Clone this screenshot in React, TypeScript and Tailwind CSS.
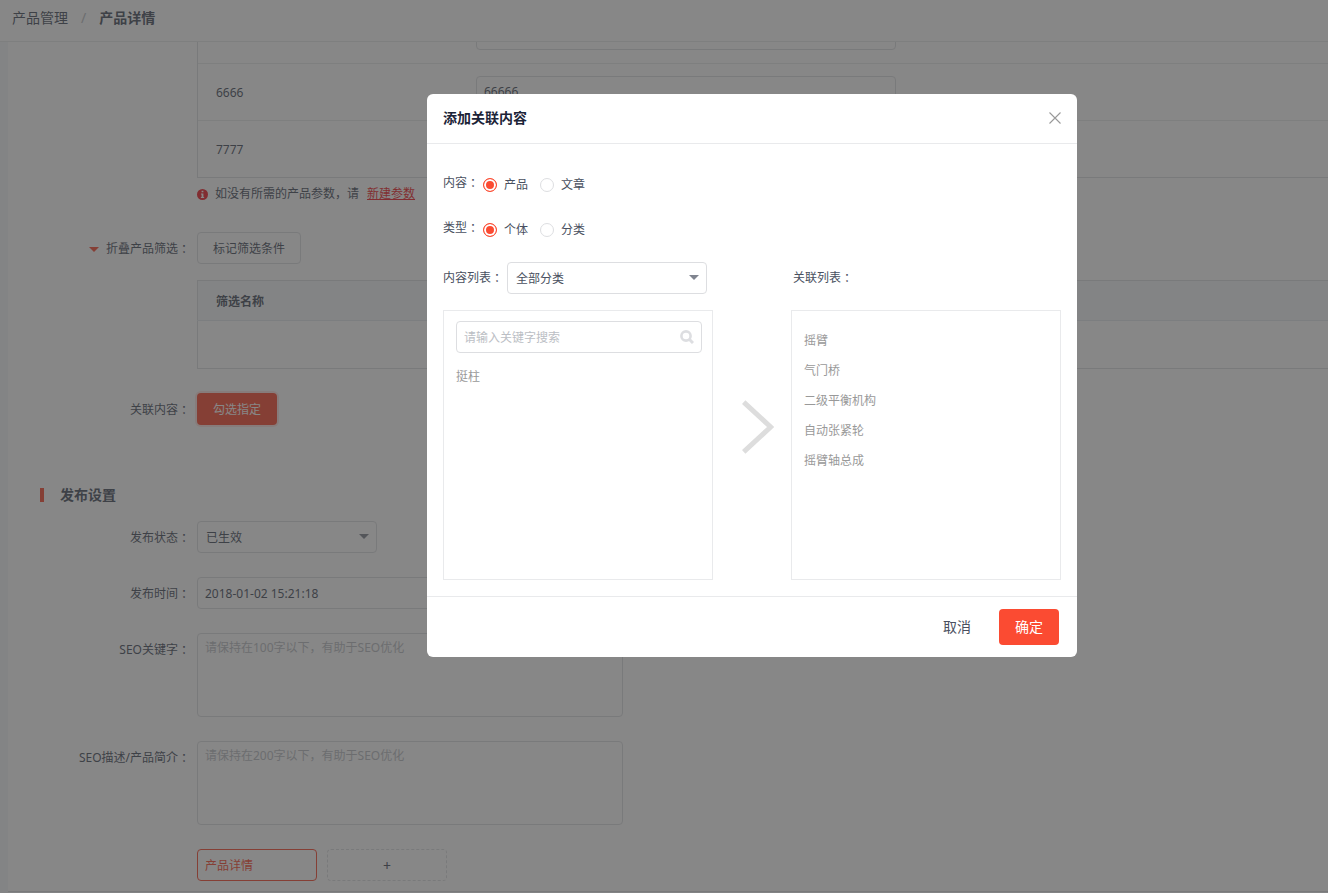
import { useState } from "react"
import type { ReactNode } from "react"
import clsx from "clsx"

interface FormRowProps {
  label: ReactNode,
  htmlFor?: string,
  className?: string,
  children: ReactNode
}

interface RadioGroupProps {
  label: string,
  name: string,
  options: string[]
}

const params = [
  { id: 1, name: "", value: "" },
  { id: 2, name: "6666", value: "66666" },
  { id: 3, name: "7777", value: "" },
]

const linkedItems = ["摇臂", "气门桥", "二级平衡机构", "自动张紧轮", "摇臂轴总成"]

const fieldClass = "rounded border border-[#dddee1] bg-white text-xs text-[#495060] placeholder:text-[#bbbec4] outline-none"

// full-width colon, moved towards the middle of its cell
const Colon = () => (
  <span className="inline-block w-3 whitespace-nowrap indent-[3px]">：</span>
)

const Caret = ({ className }: { className?: string }) => (
  <svg viewBox="0 0 10 5" className={clsx("h-[5px] w-[10px]", className)} aria-hidden="true">
    <path d="M0 0h10L5 5z" fill="currentColor" />
  </svg>
)

const Select = ({ id, options, className }: { id: string, options: string[], className?: string }) => (
  <div className={clsx("relative", className)}>
    <select id={id} className={clsx(fieldClass, "block h-8 w-full appearance-none px-2 pt-px")}>
      {options.map((o) => <option key={o}>{o}</option>)}
    </select>
    <Caret className="pointer-events-none absolute right-2 top-[13px] text-[#80848f]" />
  </div>
)

const FormRow = ({ label, htmlFor, className, children }: FormRowProps) => (
  <div className={clsx("flex gap-[7px]", className)}>
    <label htmlFor={htmlFor} className="h-8 w-[182px] shrink-0 text-right leading-[34px]">
      {label}
    </label>
    <div className="min-w-0 flex-1">{children}</div>
  </div>
)

const RadioGroup = ({ label, name, options }: RadioGroupProps) => {
  const [value, setValue] = useState(options[0])

  return (
    <div role="radiogroup" aria-label={label} className="flex h-5 items-center">
      <span className="mb-1 w-10">{label}<Colon /></span>
      {options.map((o) => (
        <label key={o} className="mr-3 flex items-center gap-[7px]">
          <input
            type="radio"
            name={name}
            checked={value === o}
            onChange={() => setValue(o)}
            className="size-[14px] appearance-none rounded-full border border-[#dddee1] bg-white checked:border-[#fb4b32] checked:bg-[#fb4b32] checked:shadow-[inset_0_0_0_2px_#fff]"
          />
          {o}
        </label>
      ))}
    </div>
  )
}

const ProductForm = () => (
  <div className="overflow-hidden border-b border-[#dddee1] bg-white pb-[10px]">
    {/* the list is scrolled, its first row is partly under the header */}
    <div className="-mt-9 ml-[189px] border-b border-l border-[#dddee1]">
      <table className="w-full table-fixed">
        <tbody>
          {params.map((p, index) => (
            <tr key={p.id} className={clsx("h-[57px]", index < params.length - 1 && "border-b border-[#e9eaec]")}>
              <td className="w-[260px] pl-[18px] pt-0.5">{p.name}</td>
              <td className="pl-[18px]">
                <input aria-label="参数值" defaultValue={p.value} className={clsx(fieldClass, "block h-8 w-[420px] px-[7px]")} />
              </td>
            </tr>
          ))}
        </tbody>
      </table>
    </div>

    <div className="ml-[189px] flex h-8 items-center">
      <svg viewBox="0 0 12 12" className="mr-[7px] size-[11px]" aria-hidden="true">
        <circle cx="6" cy="6" r="6" fill="#f01e28" />
        <path d="M5 2h2v1.600h-2zM4.300 4.800h2.700v3.800h.800v1.100h-3.600v-1.100h.800v-2.700h-.700z" fill="#fff" />
      </svg>
      <span>如没有所需的产品参数，请</span>
      <a href="#new" className="ml-2 text-[#f01e28] underline">新建参数</a>
    </div>

    <FormRow
      className="mt-[22px]"
      label={<><Caret className="mr-[7px] inline-block align-middle text-[#fb4b32]" />折叠产品筛选<Colon /></>}
    >
      <button className={clsx(fieldClass, "block h-8 px-[15px] pt-0.5")}>标记筛选条件</button>
      <table className="mt-4 w-full border-y border-l border-[#dddee1]">
        <thead>
          <tr className="h-10 border-b border-[#e3e8ee] bg-[#f5f7f9]">
            <th className="pl-[18px] pt-0.5 text-left font-bold">筛选名称</th>
          </tr>
        </thead>
        <tbody>
          <tr className="h-12"><td></td></tr>
        </tbody>
      </table>
    </FormRow>

    <FormRow className="mt-6" label={<>关联内容<Colon /></>}>
      <button className="block h-8 rounded bg-[#fb4b32] px-4 pt-0.5 text-white shadow-[0_0_0_2px_rgba(251,75,50,0.15)]">勾选指定</button>
    </FormRow>

    <h2 className="ml-8 mt-14 flex h-7 items-center gap-4 text-sm font-bold">
      <span className="h-[14px] w-1 bg-[#fb4b32]"></span>
      发布设置
    </h2>

    <div className="mt-3 flex flex-col gap-6">
      <FormRow htmlFor="status" label={<>发布状态<Colon /></>}>
        <Select id="status" options={["已生效", "未生效"]} className="w-[180px]" />
      </FormRow>
      <FormRow htmlFor="time" label={<>发布时间<Colon /></>}>
        <input id="time" defaultValue="2018-01-02 15:21:18" className={clsx(fieldClass, "block h-8 w-[426px] px-[7px]")} />
      </FormRow>
      <FormRow htmlFor="keywords" label={<>SEO关键字<Colon /></>}>
        <textarea id="keywords" placeholder="请保持在100字以下，有助于SEO优化" className={clsx(fieldClass, "block h-[84px] w-[426px] resize-none px-[7px] py-1 leading-5")} />
      </FormRow>
      <FormRow htmlFor="desc" label={<>SEO描述/产品简介<Colon /></>}>
        <textarea id="desc" placeholder="请保持在200字以下，有助于SEO优化" className={clsx(fieldClass, "block h-[84px] w-[426px] resize-none px-[7px] py-1 leading-5")} />
      </FormRow>
      <div className="ml-[189px] flex gap-[10px]">
        <button className="h-8 w-[120px] rounded border border-[#fb4b32] px-[7px] pt-0.5 text-left text-[#fb4b32]">产品详情</button>
        <button aria-label="添加" className="h-8 w-[120px] rounded border border-dashed border-[#dddee1] pt-0.5 text-sm">+</button>
      </div>
    </div>
  </div>
)

const LinkModal = () => (
  <div className="fixed inset-0 flex items-start justify-center bg-[rgba(55,55,55,0.6)] pl-[176px] pt-[94px]">
    <div role="dialog" aria-labelledby="modal-title" className="w-[650px] rounded-md bg-white">
      <div className="flex h-[50px] items-center justify-between border-b border-[#e9eaec] px-4 pb-0.5">
        <h1 id="modal-title" className="text-sm font-bold text-[#1c2438]">添加关联内容</h1>
        <button aria-label="关闭">
          <svg viewBox="0 0 12 12" className="size-3" aria-hidden="true">
            <path d="M.500.500l11 11M11.500.500l-11 11" stroke="#999" strokeWidth="1.100" fill="none" />
          </svg>
        </button>
      </div>

      <div className="px-4 pb-4 pt-[31px]">
        <div className="flex flex-col gap-[25px]">
          <RadioGroup label="内容" name="content" options={["产品", "文章"]} />
          <RadioGroup label="类型" name="type" options={["个体", "分类"]} />
        </div>

        <div className="mt-[22px] flex justify-between">
          <div className="flex items-center">
            <label htmlFor="category" className="w-16">内容列表<Colon /></label>
            <Select id="category" options={["全部分类"]} className="w-[200px]" />
          </div>
          <div className="h-8 w-[268px] leading-8">关联列表<Colon /></div>
        </div>

        <div className="mt-4 flex items-center justify-between text-[#999]">
          <div className="h-[270px] w-[270px] border border-[#e9eaec] py-[10px] pl-3 pr-[10px]">
            <div className="relative">
              <input aria-label="搜索" placeholder="请输入关键字搜索" className={clsx(fieldClass, "block h-8 w-full pl-[7px] pr-8")} />
              <svg viewBox="0 0 14 14" className="pointer-events-none absolute right-2 top-[9px] size-[14px]" aria-hidden="true">
                <circle cx="6" cy="6" r="4.600" fill="none" stroke="#dddee1" strokeWidth="2.600" />
                <path d="M9.300 9.300l3.700 3.700" stroke="#dddee1" strokeWidth="3" />
              </svg>
            </div>
            <ul className="mt-[9px] leading-[30px]">
              <li>挺柱</li>
            </ul>
          </div>

          <svg viewBox="0 0 32 54" className="mb-9 ml-3 h-[54px] w-8" aria-hidden="true">
            <path d="M1.700 2.200l27 24.800L1.700 51.800" fill="none" stroke="#ddd" strokeWidth="5" />
          </svg>

          <ul className="h-[270px] w-[270px] border border-[#e9eaec] px-3 py-[15px] leading-[30px]">
            {linkedItems.map((item) => <li key={item}>{item}</li>)}
          </ul>
        </div>
      </div>

      <div className="flex items-center justify-end gap-7 border-t border-[#e9eaec] py-3 pr-[18px] text-sm">
        <button>取消</button>
        <button className="h-9 rounded bg-[#fb4b32] px-4 text-white">确定</button>
      </div>
    </div>
  </div>
)

const App = () => (
  <div className="min-h-screen bg-[#f5f7f9] font-['Noto_Sans','Noto_Sans_CJK_SC',sans-serif] text-xs text-[#495060]">
    <nav className="flex h-[42px] items-center gap-[13px] border-b border-[#e9eaec] bg-white pb-1.5 pl-3 text-sm">
      <a href="#products">产品管理</a>
      <span className="text-[#bbbec4]">/</span>
      <span className="font-bold">产品详情</span>
    </nav>
    <main className="pl-2">
      <ProductForm />
    </main>
    <LinkModal />
  </div>
)

export default App
